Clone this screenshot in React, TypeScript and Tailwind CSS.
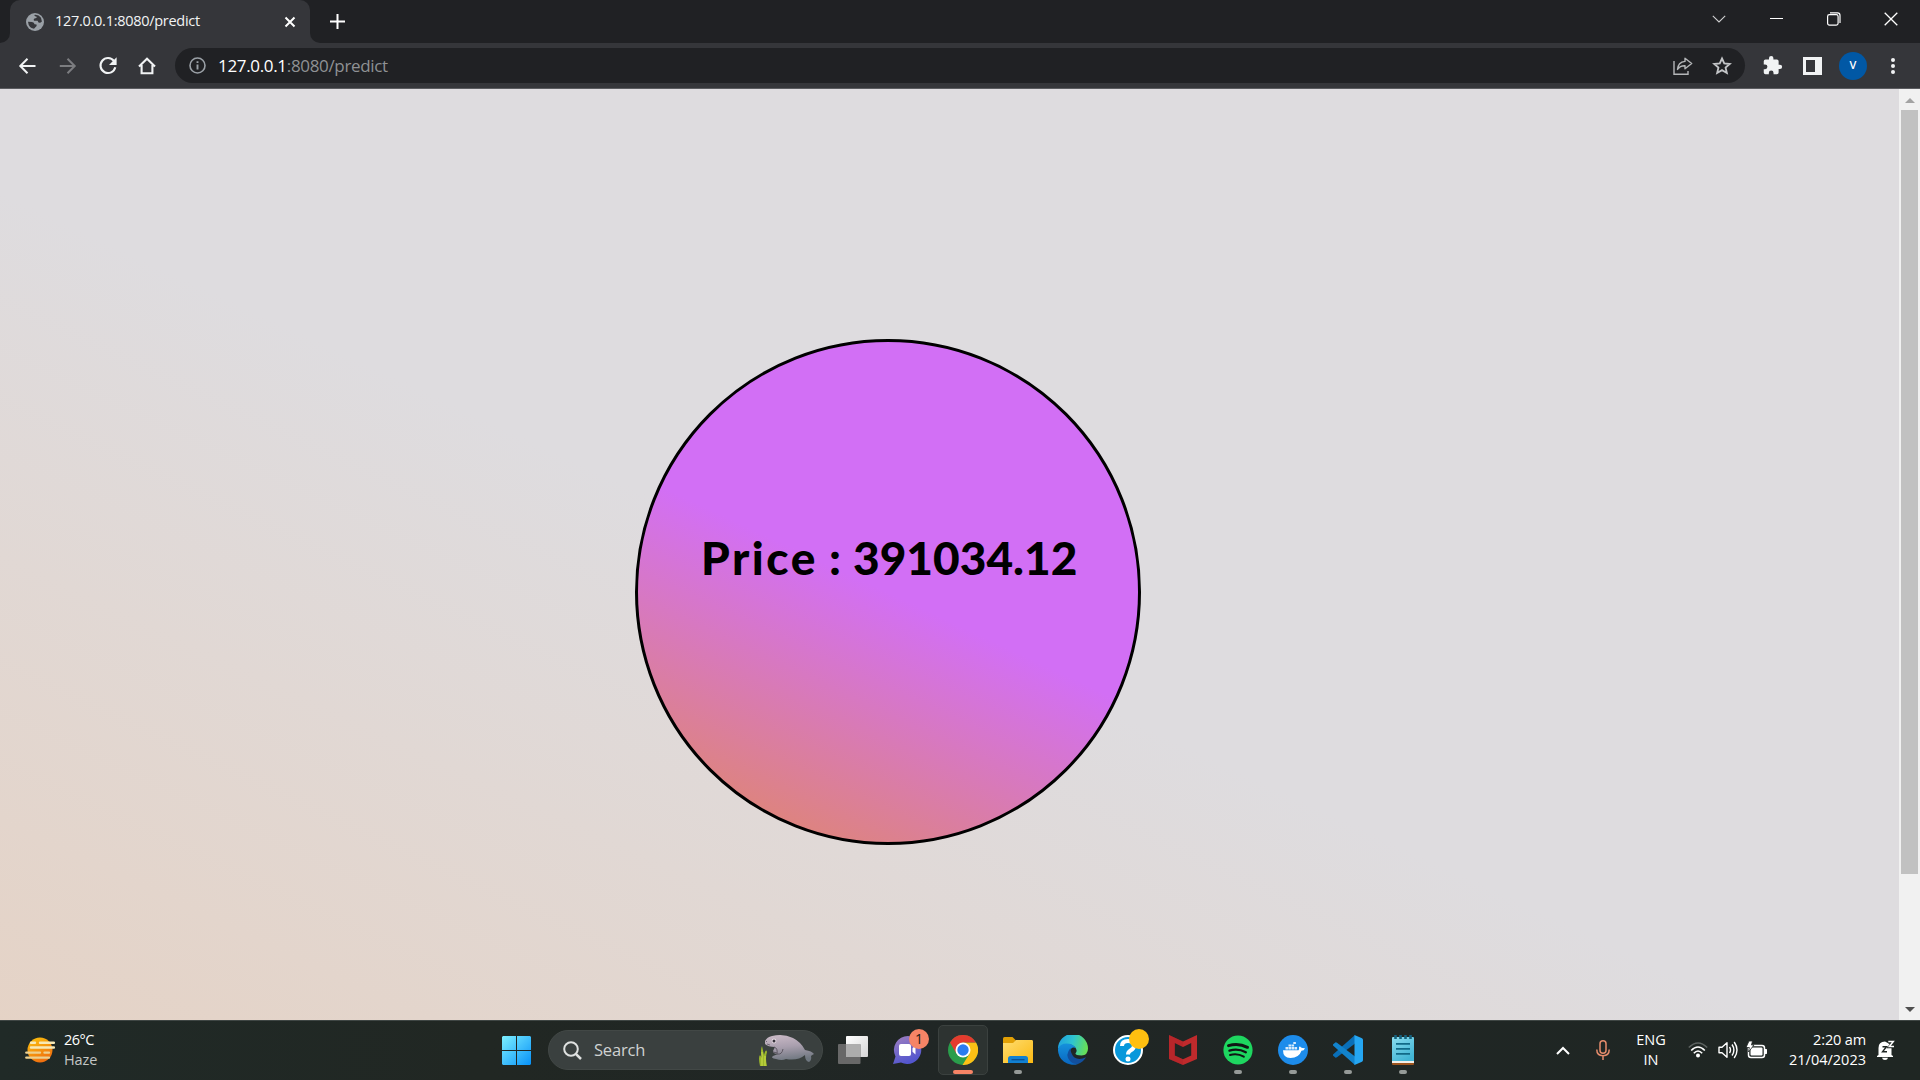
import React from "react";

function Globe() {
  return (
    <svg width="18" height="18" viewBox="0 0 18 18">
      <circle cx="9" cy="9" r="9" fill="#9aa0a6" />
      <path d="M2 8.800 L6 9 Q8.500 9.300 8.500 11.200 L10.600 11.600 V13 L8 15.800 Q2.600 15 2 8.800Z" fill="#35363a" />
      <path d="M8 2 Q12.500 1.200 15 4.800 L15.900 8.500 Q14.500 10.200 12.500 9.600 L11.600 7.800 H8 Q7 5.600 9.600 5.300 L11.300 4 L9.600 3.600Z" fill="#35363a" />
    </svg>
  );
}

function TabStrip() {
  return (
    <div className="flex h-[43px] bg-[#202124]">
      <div className="flex w-[10px] items-end bg-[#35363a]">
        <div className="h-[43px] w-[10px] rounded-br-[10px] bg-[#202124]" />
      </div>
      <div className="flex w-[300px] items-center rounded-t-[10px] bg-[#35363a] pl-4 pr-[14px]">
        <Globe />
        <span className="ml-[11px] pb-[2px] text-[14.5px] tracking-[-0.28px] text-[#f1f3f4]">127.0.0.1:8080/predict</span>
        <svg className="ml-auto" width="12" height="12" viewBox="0 0 12 12">
          <path d="M1.500 1.500 10.500 10.500M10.500 1.500 1.500 10.500" stroke="#fff" strokeWidth="2" />
        </svg>
      </div>
      <div className="flex w-[10px] bg-[#35363a]">
        <div className="h-[43px] w-[10px] rounded-bl-[10px] bg-[#202124]" />
      </div>
      <div className="flex w-[35px] items-center justify-center">
        <svg width="15" height="15" viewBox="0 0 15 15">
          <path d="M7.500 0v15M0 7.500h15" stroke="#fff" strokeWidth="2" />
        </svg>
      </div>
      <div className="ml-auto flex h-[37px] items-center">
        <div className="flex w-[58px] justify-center">
          <svg width="14" height="8" viewBox="0 0 14 8">
            <path d="M.8 .8 7 7 13.200 .8" fill="none" stroke="#d0d0d1" strokeWidth="1.100" />
          </svg>
        </div>
        <div className="flex w-[57px] justify-center">
          <div className="h-px w-[13px] bg-white" />
        </div>
        <div className="flex w-[57px] justify-center">
          <svg width="14" height="14" viewBox="0 0 14 14" fill="none" stroke="#fff" strokeWidth="1.200">
            <rect x=".6" y="2.600" width="10.500" height="10.500" rx="1.800" />
            <path d="M3 .9H10.500Q13 .9 13 3.400V11" />
          </svg>
        </div>
        <div className="flex w-[58px] justify-center">
          <svg width="14" height="14" viewBox="0 0 14 14">
            <path d="M.7 .7 13.300 13.300M13.300 .7 .7 13.300" stroke="#fff" strokeWidth="1.300" />
          </svg>
        </div>
      </div>
    </div>
  );
}

function Toolbar() {
  return (
    <div className="flex h-[46px] items-center border-b border-[#5b5c60] bg-[#35363a] pb-[3px] pt-[3px]">
      <div className="flex w-[175px] items-center pl-[18px]">
        <svg width="18" height="18" viewBox="0 0 18 18" fill="none" stroke="#f1f3f4" strokeWidth="2">
          <path d="M17.500 9H2.500M9.500 1.800 2.300 9 9.500 16.200" />
        </svg>
        <svg className="ml-[23px]" width="18" height="18" viewBox="0 0 18 18" fill="none" stroke="#7c7d80" strokeWidth="2">
          <path d="M.8 9H15.500M8.500 1.800 15.700 9 8.500 16.200" />
        </svg>
        <svg className="ml-[21px]" width="20" height="20" viewBox="0 0 20 20">
          <path d="M16 5A7.500 7.500 0 1 0 17.300 11.300" fill="none" stroke="#f1f3f4" strokeWidth="2.100" />
          <path d="M18.600 1.300V9H11Z" fill="#f1f3f4" />
        </svg>
        <svg className="ml-[20px]" width="18" height="18" viewBox="0 0 18 18" fill="none" stroke="#f1f3f4" strokeWidth="2.100">
          <path d="M1 9.500 9 1.800 17 9.500M3.600 8V16.200H14.400V8" />
        </svg>
      </div>
      <div className="flex h-[35px] w-[1570px] items-center rounded-full bg-[#202124] pl-[14px] pr-[13px]">
        <svg width="17" height="17" viewBox="0 0 17 17">
          <circle cx="8.500" cy="8.500" r="7.500" fill="none" stroke="#9aa0a6" strokeWidth="1.600" />
          <path d="M8.500 7.500V12.500M8.500 4.300V6.100" stroke="#9aa0a6" strokeWidth="1.900" />
        </svg>
        <span className="ml-[12px] pb-px text-[17px] leading-none tracking-[-0.33px] text-[#8f9194]">
          <span className="text-white">127.0.0.1</span>:8080/predict
        </span>
        <svg className="ml-auto" width="20" height="18" viewBox="0 0 20 18" fill="none" stroke="#b4b6b8" strokeWidth="1.400">
          <path d="M1 4V17.200H15V14" />
          <path d="M12 1.300 18.700 6.500 12 11.700V8.700Q7 8.500 4.500 12.500 5 5.200 12 4.400Z" strokeLinejoin="round" />
        </svg>
        <svg className="ml-[19px]" width="20" height="20" viewBox="0 0 24 24" fill="none" stroke="#c3c5c7" strokeWidth="2.200">
          <path d="M12 3 14.700 9 21.300 9.600 16.300 14 17.800 20.400 12 17 6.200 20.400 7.700 14 2.700 9.600 9.300 9Z" />
        </svg>
      </div>
      <div className="flex flex-1 items-center pl-[17px]">
        <svg width="21" height="21" viewBox="0 0 24 24" fill="#f1f3f4">
          <path d="M20.500 11H19V7a2 2 0 0 0-2-2h-4V3.500a2.500 2.500 0 0 0-5 0V5H4a2 2 0 0 0-2 2v3.800h1.500a2.700 2.700 0 0 1 0 5.400H2V20a2 2 0 0 0 2 2h3.800v-1.500a2.700 2.700 0 0 1 5.400 0V22H17a2 2 0 0 0 2-2v-4h1.500a2.500 2.500 0 0 0 0-5z" />
        </svg>
        <div className="ml-[20px] flex h-[18px] w-[19px] border-[3px] border-r-[7px] border-[#f1f3f4]" />
        <div className="ml-[17px] flex size-7 items-center justify-center rounded-full bg-[#0158a5] text-[11px] font-semibold text-white">
          V
        </div>
        <div className="ml-[24px] flex flex-col gap-[2px]">
          <i className="size-1 rounded-full bg-[#f1f3f4]" />
          <i className="size-1 rounded-full bg-[#f1f3f4]" />
          <i className="size-1 rounded-full bg-[#f1f3f4]" />
        </div>
      </div>
    </div>
  );
}

function Page() {
  return (
    <div className="flex h-[931px]">
      <main className="w-[1899px] bg-[linear-gradient(25deg,#e6d1c1,#dedcdf_50%)] bg-[length:1899px_1092px] pl-[635px] pt-[250px]">
        <div className="size-[506px] rounded-full border-[3px] border-black bg-[linear-gradient(25deg,#e18a5a,#d26ff5_50%)] pt-[188px]">
          <h1 className="flex h-[56px] items-center whitespace-nowrap pl-[63px] font-[Lato] text-[46px] font-black leading-none text-black">
            <span className="w-[128px] tracking-[2.5px]">Price</span>
            <span className="w-[24px]">:</span>
            <span>391034.12</span>
          </h1>
        </div>
      </main>
      <div className="flex w-[21px] flex-col items-center bg-[#f1f1f1]">
        <div className="flex h-[21px] items-center pt-[2px]">
          <svg width="10" height="5" viewBox="0 0 10 5">
            <path d="M5 0 10 5H0Z" fill="#a3a3a3" />
          </svg>
        </div>
        <div className="h-[764px] w-[17px] bg-[#c1c1c1]" />
        <svg className="mb-[8px] mt-auto" width="10" height="5" viewBox="0 0 10 5">
          <path d="M0 0H10L5 5Z" fill="#505050" />
        </svg>
      </div>
    </div>
  );
}

function Haze() {
  return (
    <svg width="30" height="26" viewBox="0 0 30 26">
      <defs>
        <linearGradient id="sun" x1="0" y1="0" x2=".5" y2="1">
          <stop offset="0" stopColor="#fcc50d" />
          <stop offset="1" stopColor="#f0700f" />
        </linearGradient>
      </defs>
      <circle cx="15" cy="13" r="12.500" fill="url(#sun)" />
      <g strokeWidth="2.400" strokeLinecap="round">
        <path d="M6 5.700H10M15 5.700H29M6 10.500H29" stroke="#f8e9b5" />
        <path d="M1.300 15.600H15M19.500 15.600H24M1.300 20.600H24" stroke="#ecd08f" />
      </g>
    </svg>
  );
}

function Manatee() {
  return (
    <svg width="56" height="34" viewBox="0 0 56 34">
      <defs>
        <linearGradient id="body" x1="0" y1="0" x2=".2" y2="1">
          <stop offset="0" stopColor="#cdbcc9" />
          <stop offset=".5" stopColor="#a99fae" />
          <stop offset="1" stopColor="#6f7780" />
        </linearGradient>
      </defs>
      <path d="M1 33 Q-1 24 1 22 L3 25 Q1 17 3 13 L5 22 Q7 15 8 19 Q6 25 8 33Z" fill="#9cb82b" />
      <path d="M3 33V19M6 33V23" stroke="#d0de4b" strokeWidth="1" />
      <path d="M6 8Q8 4 13 3Q24 0 34 5Q42 9 46 17Q53 18 55 21Q53 22 52 23Q53 27 50 29Q46 28 46 22Q39 28 27 26Q23 28 17 26Q11 25 14 23L19 21Q14 21 14 18L16 14Q9 14 6 11Z" fill="url(#body)" />
      <path d="M15 14Q19 15 18 21Q23 22 24 16M14 19l4 1" fill="none" stroke="#5d5762" strokeWidth="1" />
      <circle cx="15" cy="8" r="2.400" fill="#e6dbe3" />
      <circle cx="15" cy="8" r="1.500" fill="#35313a" />
      <path d="M7 8l1 1M8 11l3 1" stroke="#6a6070" strokeWidth=".9" />
    </svg>
  );
}

function TaskView() {
  return (
    <svg width="30" height="30" viewBox="0 0 30 30">
      <defs>
        <linearGradient id="tv" x2="1" y2="1">
          <stop stopColor="#fff" />
          <stop offset="1" stopColor="#d5d5d5" />
        </linearGradient>
      </defs>
      <rect x="8" y="1" width="22" height="21" rx="1" fill="url(#tv)" />
      <rect x="0" y="9" width="22.500" height="20" rx="1" fill="#686868" />
      <path d="M8 9H22.500V22H8Z" fill="#adadad" />
    </svg>
  );
}

function Chat() {
  return (
    <div className="relative size-[30px]">
      <svg width="30" height="30" viewBox="0 0 30 30">
        <defs>
          <linearGradient id="chat" x2=".4" y2="1">
            <stop stopColor="#a07fbe" />
            <stop offset="1" stopColor="#5356cf" />
          </linearGradient>
        </defs>
        <path d="M15 1A14 14 0 1 1 8 27.500L0 29 2.500 21.500A14 14 0 0 1 15 1Z" fill="url(#chat)" />
        <rect x="6" y="9" width="12" height="12" rx="2" fill="#fff" />
        <path d="M19.500 13.200 22.500 10.500V19.500L19.500 16.800Z" fill="#fff" />
      </svg>
      <div className="absolute left-[16px] top-[-6px] flex size-5 items-center justify-center rounded-full bg-[#f68466] text-[14px] leading-none text-[#201915]">
        1
      </div>
    </div>
  );
}

function Chrome() {
  return (
    <svg width="30" height="30" viewBox="0 0 30 30">
      <circle cx="15" cy="15" r="15" fill="#2a9d4b" />
      <path d="M15 7.500H28A15 15 0 0 1 14.500 30L21.500 18.700Z" fill="#fdc015" />
      <path d="M2 7.500A15 15 0 0 1 28 7.500H15Q10 8 8.500 18.700Z" fill="#e33b2e" />
      <circle cx="15" cy="15" r="7.500" fill="#fff" />
      <circle cx="15" cy="15" r="5.700" fill="#2b7cf0" />
    </svg>
  );
}

function Explorer() {
  return (
    <svg width="30" height="30" viewBox="0 0 30 30">
      <defs>
        <linearGradient id="fold" x2="1" y2="1">
          <stop stopColor="#ffdd70" />
          <stop offset="1" stopColor="#fbb912" />
        </linearGradient>
      </defs>
      <path d="M0 3.500Q0 2 1.500 2H9.500L13 5.500V10H0Z" fill="#e2a005" />
      <path d="M0 8H10L13 5H29Q30 5 30 6.500V28H0Z" fill="url(#fold)" />
      <path d="M5 28V23.500Q5 21 7.500 21H22.500Q25 21 25 23.500V28Z" fill="#1180d2" />
      <path d="M8.500 24.700H21.500" stroke="#0b4f92" strokeWidth="1.300" />
    </svg>
  );
}

function Edge() {
  return (
    <svg width="30" height="30" viewBox="0 0 30 30">
      <defs>
        <linearGradient id="e1" x1="0" y1=".2" x2="1" y2=".4">
          <stop stopColor="#1e9fe0" />
          <stop offset=".5" stopColor="#2fc5cf" />
          <stop offset="1" stopColor="#66df58" />
        </linearGradient>
        <linearGradient id="e2" x2="0" y2="1">
          <stop stopColor="#1591dc" />
          <stop offset="1" stopColor="#0966c0" />
        </linearGradient>
      </defs>
      <path d="M0 14A15 15 0 0 1 30 13.500Q30 20 23.500 20.500 17 20.500 17.500 18.300 20 16 17 12 9 5 0 14Z" fill="url(#e1)" />
      <path d="M0 14Q2 8.500 8.500 8.500 15 8.500 18 13 13 11 11.500 17 11.500 26 20 28.900A15 15 0 0 1 0 14Z" fill="url(#e2)" />
      <path d="M12.500 13Q6.500 20 12 26 15 29.500 20 29Q25.500 27 28 22.300 21 25.500 16.500 22.500 12.500 19 12.500 13Z" fill="#124f9d" />
    </svg>
  );
}

function Help() {
  return (
    <div className="relative size-[30px]">
      <div className="flex size-[30px] items-center justify-center rounded-full border-2 border-white bg-[#0898db]">
        <svg width="20" height="24" viewBox="0 0 20 24">
          <path d="M4 8Q4 3 10 3T16 8Q16 10.500 12.500 12.500 10 14 10 16.500" fill="none" stroke="#fff" strokeWidth="4" />
          <circle cx="10" cy="21" r="2.500" fill="#fff" />
        </svg>
      </div>
      <div className="absolute left-[16px] top-[-6px] size-5 rounded-full bg-[#ffbf10]" />
    </div>
  );
}

function McAfee() {
  return (
    <svg width="28" height="30" viewBox="0 0 28 30">
      <path d="M0 0 14 6.500 28 0V24L14 30 0 24Z" fill="#bf2a2c" />
      <path d="M5.800 8 14 12 22.200 8V20.500L14 24.300 5.800 20.500Z" fill="#202523" />
      <path d="M0 0 14 6.500V12L5.800 8V20.500L14 24.300V30L0 24Z" fill="#a81f27" opacity=".35" />
    </svg>
  );
}

function Spotify() {
  return (
    <svg width="30" height="30" viewBox="0 0 30 30" fill="none" stroke="#101614" strokeLinecap="round">
      <circle cx="15" cy="15" r="14.600" fill="#1ed760" stroke="none" />
      <path d="M5.500 10.600Q15.500 7.600 24.500 12.300" strokeWidth="3" />
      <path d="M6.500 15.600Q15 13 22.800 17.200" strokeWidth="2.400" />
      <path d="M7 20Q14.500 18 20.800 21.700" strokeWidth="2" />
    </svg>
  );
}

function Docker() {
  return (
    <svg width="30" height="30" viewBox="0 0 30 30">
      <circle cx="15" cy="15" r="15" fill="#1d8ceb" />
      <path d="M5 15.300H20.500Q21.500 15 21 12 22 11 23 12.500 24 13.300 27 13.300 26 15.800 23.500 15.800 21 23 12.500 23 5 23 5 15.300Z" fill="#fff" />
      <path d="M7.500 12h2.600v2.500h-2.600zM10.500 12h2.600v2.500h-2.600zM13.500 12h2.600v2.500h-2.600zM16.500 12h2.600v2.500h-2.600zM10.500 9.500h2.600v2h-2.600zM13.500 9.500h2.600v2h-2.600zM15.300 7h2.600v2h-2.600z" fill="#d9ecfc" />
    </svg>
  );
}

function VSCode() {
  return (
    <svg width="30" height="30" viewBox="0 0 30 30">
      <path d="M22 0 0 19.500Q-.3 20.500 .5 21L2.300 22.500Q3 23 4 22.300L22 8.500Z" fill="#0a6fb8" />
      <path d="M22 30 0 10.500Q-.3 9.500 .5 9L2.300 7.500Q3 7 4 7.700L22 21.500Z" fill="#1283cd" />
      <path d="M21.500 0 29 3.300Q30 4 30 5V25Q30 26 29 26.700L21.500 30Z" fill="#25a6f2" />
    </svg>
  );
}

function Notepad() {
  return (
    <svg width="22" height="30" viewBox="0 0 22 30">
      <defs>
        <linearGradient id="np" x2=".6" y2="1">
          <stop stopColor="#8adcee" />
          <stop offset="1" stopColor="#42b5d5" />
        </linearGradient>
      </defs>
      <rect x="0" y="27" width="22" height="3" rx="1" fill="#9c531d" />
      <rect x="0" y="25" width="22" height="3" fill="#f1eee9" />
      <path d="M0 3Q0 2 1 2H21Q22 2 22 3V26H0Z" fill="url(#np)" />
      <path d="M4 8.800H18M4 13.800H18M4 18.800H18" stroke="#116987" strokeWidth="1.700" />
      <path d="M3.500 0V4M8.500 0V4M13.500 0V4M18.500 0V4" stroke="#15617d" strokeWidth="2.600" />
    </svg>
  );
}

function TaskButton({ children, running, active }: { children: React.ReactNode; running?: boolean; active?: boolean }) {
  return (
    <div className="flex w-[55px] justify-center">
      <div
        className={
          active
            ? "flex h-[50px] w-[50px] flex-col items-center justify-end rounded-[5px] border border-[#3b413f] bg-[#2d3331]"
            : "flex h-[50px] w-[50px] flex-col items-center justify-end pb-px"
        }
      >
        {children}
        <div className="flex h-[9px] items-end">
          {active && <div className="h-1 w-5 rounded-full bg-[#f68466]" />}
          {running && <div className="h-1 w-2 rounded-full bg-[#959a98]" />}
        </div>
      </div>
    </div>
  );
}

function Taskbar() {
  return (
    <div className="flex h-[60px] items-center border-t border-[#3f4644] bg-[linear-gradient(90deg,#202a27,#212723_25%,#202625_50%,#1f2623)] pb-px text-white">
      <div className="flex w-[489px] items-center pl-[25px]">
        <Haze />
        <div className="ml-[9px] pb-px text-[14.5px] leading-5 tracking-[-0.5px]">
          <div>26°C</div>
          <div className="tracking-[-0.1px] text-[#c3c6c5]">Haze</div>
        </div>
      </div>
      <div className="flex w-[55px] justify-center">
        <svg width="29" height="29" viewBox="0 0 29 29">
          <defs>
            <linearGradient id="win" x2="1" y2="1">
              <stop stopColor="#7df0ff" />
              <stop offset="1" stopColor="#0791f8" />
            </linearGradient>
          </defs>
          <path d="M1 0H14V14H0V1ZM15 0H28L29 1V14H15ZM0 15H14V29H1L0 28ZM15 15H29V28L28 29H15Z" fill="url(#win)" />
        </svg>
      </div>
      <div className="ml-1 flex h-10 w-[275px] items-center rounded-full border border-[#424846] bg-[#3a403f] pl-[14px]">
        <svg width="19" height="19" viewBox="0 0 19 19" fill="none" stroke="#dfe1e0" strokeWidth="2">
          <circle cx="8" cy="8" r="6.800" />
          <path d="M12.800 12.800 18 18" strokeWidth="2.500" />
        </svg>
        <span className="ml-[12px] pt-px text-[16.5px] tracking-[-0.2px] text-[#cfd2d1]">Search</span>
        <div className="ml-auto mr-[7px]">
          <Manatee />
        </div>
      </div>
      <div className="ml-[2.5px] flex">
        <TaskButton><TaskView /></TaskButton>
        <TaskButton><Chat /></TaskButton>
        <TaskButton active><Chrome /></TaskButton>
        <TaskButton running><Explorer /></TaskButton>
        <TaskButton><Edge /></TaskButton>
        <TaskButton><Help /></TaskButton>
        <TaskButton><McAfee /></TaskButton>
        <TaskButton running><Spotify /></TaskButton>
        <TaskButton running><Docker /></TaskButton>
        <TaskButton running><VSCode /></TaskButton>
        <TaskButton running><Notepad /></TaskButton>
      </div>
      <Tray />
    </div>
  );
}

function Tray() {
  return (
    <div className="ml-auto flex items-center pr-[26px]">
      <svg width="14" height="9" viewBox="0 0 14 9">
        <path d="M1 8 7 2 13 8" fill="none" stroke="#fff" strokeWidth="2" />
      </svg>
      <svg className="ml-[26px]" width="14" height="20" viewBox="0 0 14 20" fill="none" stroke="#e58c6c" strokeWidth="1.500">
        <rect x="4" y=".8" width="6" height="12.500" rx="3" />
        <path d="M.8 9.500Q.8 15.700 7 15.700T13.200 9.500M7 15.700V20" />
      </svg>
      <div className="ml-[20px] w-[42px] text-center text-[14.5px] leading-5">
        <div>ENG</div>
        <div>IN</div>
      </div>
      <svg className="ml-[16px]" width="20" height="16" viewBox="0 0 20 16" fill="none" stroke="#fff" strokeWidth="1.600">
        <path d="M.8 5.500Q10-3.500 19.200 5.500" stroke="#5d6361" />
        <path d="M3.200 8.500Q10 1.500 16.800 8.500M5.800 11.300Q10 6.800 14.200 11.300" />
        <circle cx="10" cy="13.500" r="2" fill="#fff" stroke="none" />
      </svg>
      <svg className="ml-[10px]" width="20" height="18" viewBox="0 0 20 18" fill="none" stroke="#fff" strokeWidth="1.400">
        <path d="M1 6.300H4L9 1.800V16.200L4 11.700H1Z" strokeLinejoin="round" />
        <path d="M11.500 6Q13.500 9 11.500 12M14 3.500Q17.800 9 14 14.500M16.200 1Q21.800 9 16.200 17" />
      </svg>
      <svg className="ml-[8px] mr-px" width="22" height="18" viewBox="0 0 22 18">
        <rect x="2.500" y="4.500" width="16" height="12" rx="2.500" fill="none" stroke="#fff" strokeWidth="1.500" />
        <rect x="4.500" y="6.500" width="12" height="8" rx="1" fill="#fff" />
        <path d="M19 8H20.500Q21 8 21 9V12Q21 13 20.500 13H19Z" fill="#fff" />
        <path d="M3 0H6.500L5.500 4H8L2.500 11 3.300 6.500H0Z" fill="#fff" stroke="#1f2623" strokeWidth=".8" />
      </svg>
      <div className="ml-[20px] flex w-[77px] flex-col items-end whitespace-nowrap text-[14.5px] leading-5">
        <div className="tracking-[-0.15px]">2:20 am</div>
        <div>21/04/2023</div>
      </div>
      <svg className="ml-[11px] -mr-px" width="18" height="20" viewBox="0 0 18 20">
        <path d="M1.500 15V8Q1.500 1.500 8 1.500L14.500 5V15L16 16V17H0V16Z" fill="#fff" />
        <path d="M5 17.700H11Q10.500 20 8 20T5 17.700Z" fill="#fff" />
        <path d="M5.500 6.700H9.500L5.500 11.800H10" fill="none" stroke="#1f2623" strokeWidth="1.400" />
        <path d="M11 1.700H16.500L12.500 6.800H17" fill="none" stroke="#1f2623" strokeWidth="3" />
        <path d="M11.300 1.500H16.300L12.300 6.600H17" fill="none" stroke="#fff" strokeWidth="1.500" />
      </svg>
    </div>
  );
}

export default function App() {
  return (
    <div className="flex h-[1080px] w-[1920px] flex-col overflow-hidden font-['Open_Sans',sans-serif]">
      <TabStrip />
      <Toolbar />
      <Page />
      <Taskbar />
    </div>
  );
}
